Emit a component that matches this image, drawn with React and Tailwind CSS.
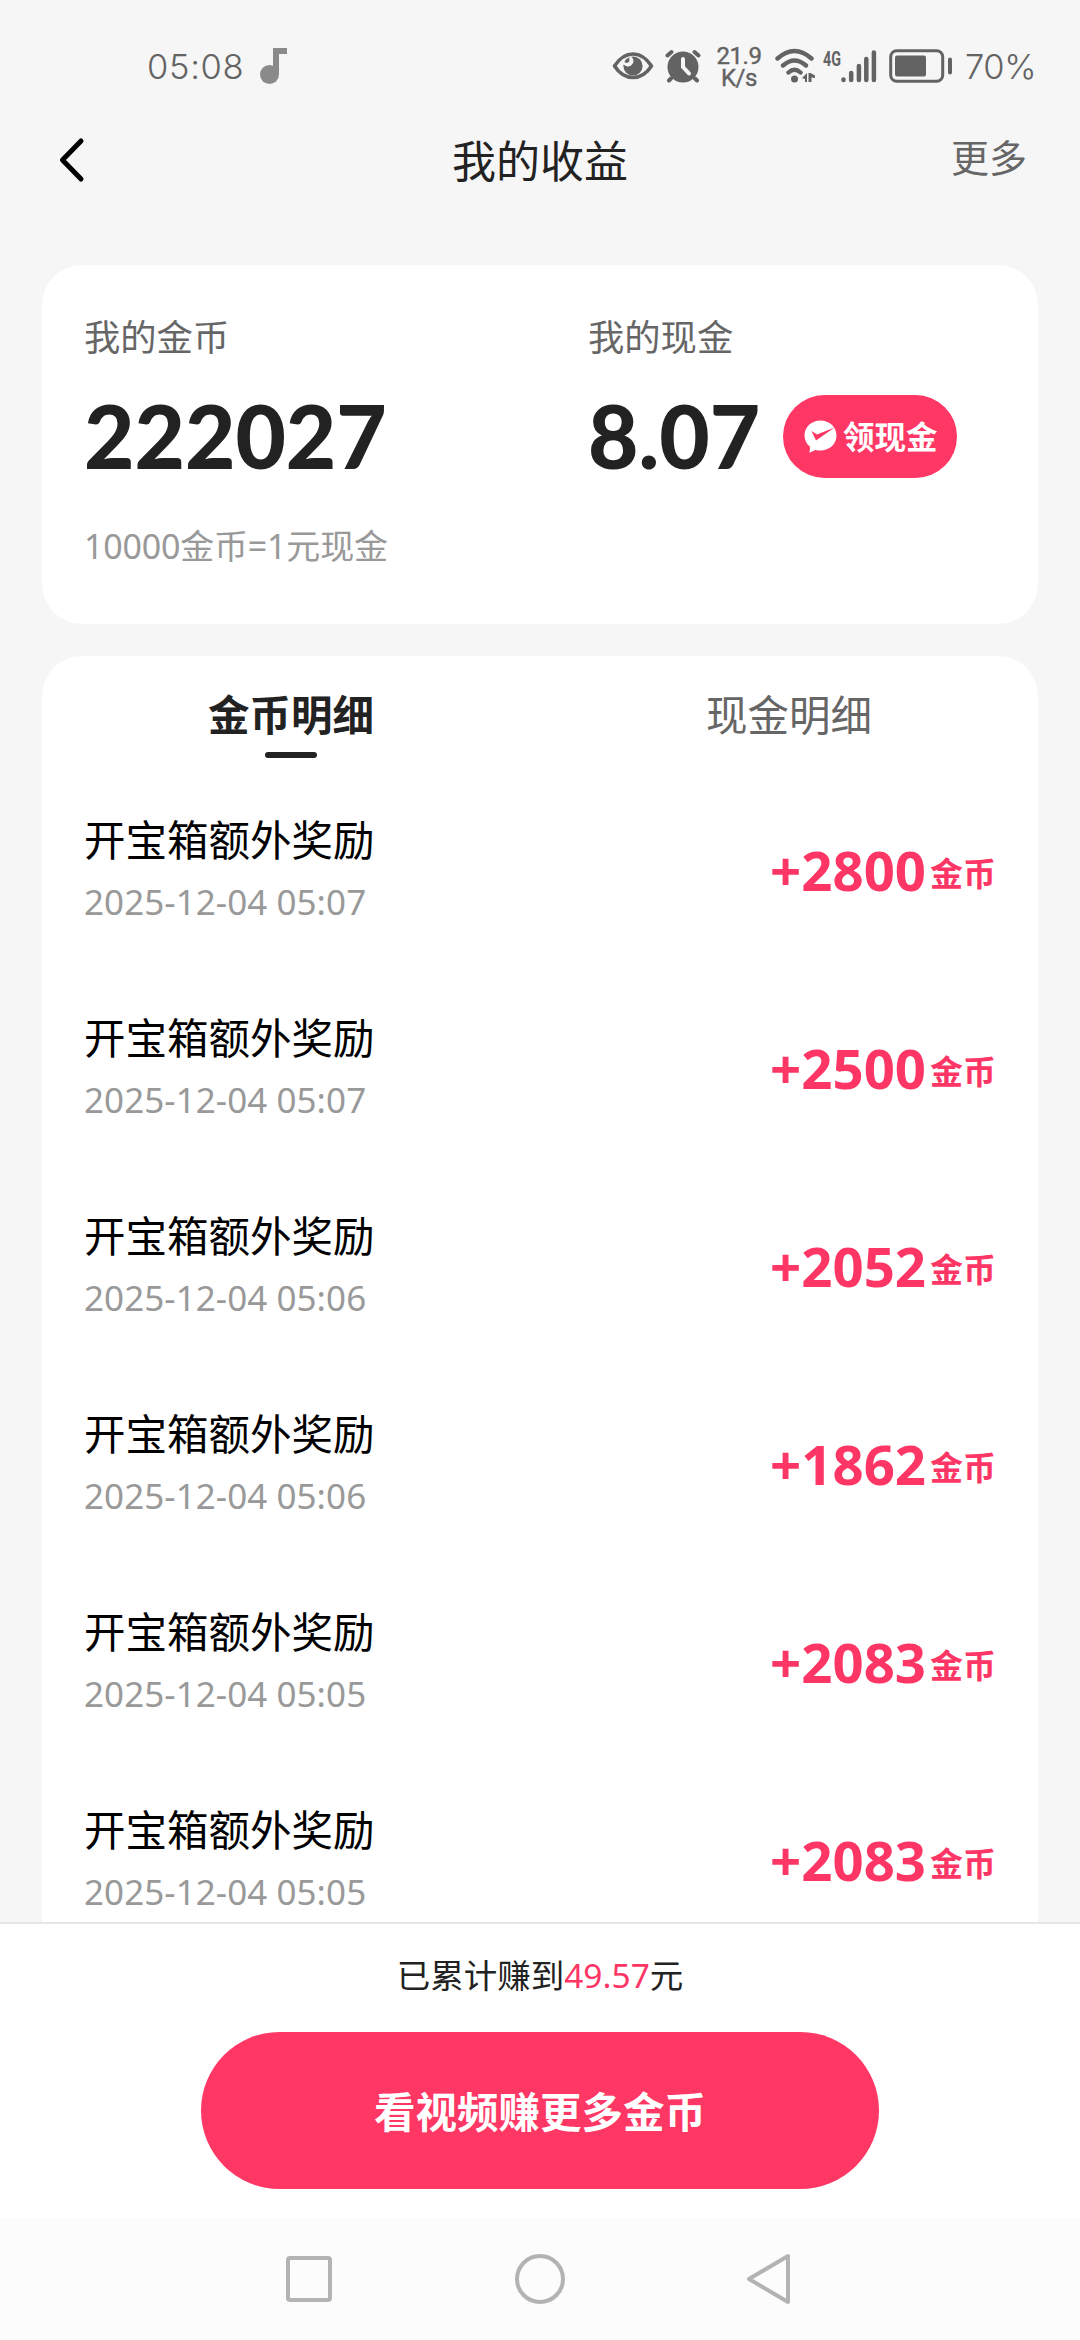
const records = [
  { title: '开宝箱额外奖励', time: '2025-12-04 05:07', amount: 2800 },
  { title: '开宝箱额外奖励', time: '2025-12-04 05:07', amount: 2500 },
  { title: '开宝箱额外奖励', time: '2025-12-04 05:06', amount: 2052 },
  { title: '开宝箱额外奖励', time: '2025-12-04 05:06', amount: 1862 },
  { title: '开宝箱额外奖励', time: '2025-12-04 05:05', amount: 2083 },
  { title: '开宝箱额外奖励', time: '2025-12-04 05:05', amount: 2083 },
]

function StatusBar() {
  return (
    <div className="flex-none h-[110px] pl-[147px] pr-[45px] pt-[22px] flex flex-row items-center text-[#636363]">
      <span className="w-[98px] mt-[2px] font-['Inter'] font-light text-[34.5px] leading-[44px] tracking-[0.7px] whitespace-nowrap">05:08</span>
      <svg className="ml-[15px] w-[28px] h-[38px]" viewBox="0 0 28 38" fill="#8a8a8a">
        <circle cx="9.5" cy="27.5" r="9.5" />
        <path d="M13 1H27V7H19V28H13Z" />
      </svg>
      <div className="flex-auto"></div>
      <svg className="w-[42px] h-[30px]" viewBox="0 0 42 30">
        <path d="M2.5 15C8 6.5 14 3 21 3S34 6.5 39.5 15C34 23.5 28 26.5 21 26.5S8 23.5 2.5 15Z" fill="none" stroke="currentColor" strokeWidth="3.6" strokeLinejoin="round" />
        <circle cx="21" cy="15" r="9.6" fill="currentColor" />
        <path d="M10.5 10.5A5.5 5.5 0 0 0 20.5 13A5 5 0 0 0 18.5 5.5L17 7Q18.5 11 15 12Z" fill="#f6f6f6" />
      </svg>
      <svg className="ml-[10px] w-[38px] h-[34px]" viewBox="0 0 38 34" fill="none" stroke="currentColor" strokeLinecap="round">
        <circle cx="19" cy="18" r="15.5" fill="currentColor" stroke="none" />
        <path d="M3.5 6.5L7.5 3M34.5 6.5L30.5 3M7 29.5L5 31.5M31 29.5L33 31.5" strokeWidth="4" />
        <path d="M19 10V18L25 24.5" stroke="#f6f6f6" strokeWidth="4" />
      </svg>
      <div className="ml-[13px] w-[48px] mt-px flex flex-col items-center font-['Roboto'] text-[24px] leading-[22px] tracking-[-0.4px] [-webkit-text-stroke:0.4px_#636363]">
        <span>21.9</span>
        <span>K/s</span>
      </div>
      <svg className="ml-[12px] w-[42px] h-[36px]" viewBox="0 0 42 36" fill="none" stroke="currentColor" strokeLinecap="round">
        <path d="M2.5 10.5Q19.5 -4.5 36.5 10.5M8 17.5Q19.5 7.5 31 17.5M13.5 24.5Q19.5 19 25.5 24.5" strokeWidth="4.4" />
        <circle cx="19.5" cy="31" r="3.5" fill="currentColor" stroke="none" />
        <path d="M27 30L32 25V34H30V31ZM33.5 25H35.5L40 27.5V30L36.5 29.5V34H33.5Z" fill="currentColor" stroke="none" />
      </svg>
      <svg className="ml-[6px] w-[54px] h-[36px] overflow-visible" viewBox="0 0 54 36" fill="none" stroke="currentColor" strokeLinecap="round">
        <text x="0" y="17.5" textLength="18" lengthAdjust="spacingAndGlyphs" fill="currentColor" stroke="none" className="font-['Roboto'] font-bold text-[21px]">4G</text>
        <path d="M20.5 31.5V32M28.2 25V32M35.9 18V32M43.3 11V32M50.9 4.5V32" strokeWidth="4.5" />
      </svg>
      <svg className="ml-[12px] w-[64px] h-[34px]" viewBox="0 0 64 34">
        <rect x="1.7" y="1.7" width="52" height="30.5" rx="6" fill="none" stroke="currentColor" strokeWidth="3" />
        <rect x="6" y="6.5" width="31" height="21" rx="2" fill="currentColor" />
        <rect x="59" y="8.5" width="4" height="17" rx="2" fill="currentColor" />
      </svg>
      <span className="ml-[12px] mt-[2px] w-[70px] font-['Inter'] font-light text-[34.5px] leading-[44px] tracking-[-0.4px] whitespace-nowrap">70%</span>
    </div>
  )
}

function Header() {
  return (
    <div className="flex-none h-[155px] px-[54px] grid grid-cols-3 items-start">
      <svg className="mt-[27px] w-[36px] h-[46px]" viewBox="0 0 36 46" fill="none" stroke="#000" strokeWidth="5" strokeLinecap="round" strokeLinejoin="round">
        <path d="M27 4L8.5 23L27 42" />
      </svg>
      <h1 className="mt-[21px] text-center text-[44px] leading-[60px] text-[#222]">我的收益</h1>
      <span className="mt-[17px] -mr-px text-right text-[38px] leading-[60px] text-[#666]">更多</span>
    </div>
  )
}

function CashButton() {
  return (
    <button className="w-[174px] h-[83px] rounded-full bg-[#ff3765] flex flex-row items-center pl-[21px]">
      <svg className="w-[33px] h-[33px]" viewBox="0 0 33 33">
        <path d="M16.5 0.5C25.5 0.5 32.5 7 32.5 15.5S25.5 30.5 16.5 30.5Q14 30.5 11.5 30L5.5 32.8L6 26.8C2.5 24 0.5 20 0.5 15.5C0.5 7 7.5 0.5 16.5 0.5Z" fill="#fff" />
        <path d="M7.5 11L13 14.5L30.5 7.5L12 20.5Z" fill="#ff3765" />
      </svg>
      <span className="ml-[6px] mt-px text-white font-bold text-[31.5px] leading-[44px] whitespace-nowrap">领现金</span>
    </button>
  )
}

function Summary() {
  return (
    <div className="flex-none mx-[42px] h-[359px] rounded-[40px] bg-white pl-[42px] flex flex-row">
      <div className="w-[504px] flex flex-col">
        <span className="mt-[46px] text-[36.3px] leading-[52px] text-[#666]">我的金币</span>
        <span className="mt-[23px] h-[100px] font-['Lato'] text-[87px] leading-[100px] font-black text-[#222]">222027</span>
        <span className="mt-[34px] text-[34px] leading-[52px] tracking-[-0.2px] text-[#999]">10000金币=1元现金</span>
      </div>
      <div className="flex flex-col">
        <span className="mt-[46px] text-[36.3px] leading-[52px] text-[#666]">我的现金</span>
        <div className="mt-[23px] h-[100px] flex flex-row items-center">
          <span className="w-[195px] font-['Lato'] text-[87px] leading-[100px] font-black text-[#222]">8.07</span>
          <CashButton />
        </div>
      </div>
    </div>
  )
}

function Record({ title, time, amount }) {
  return (
    <li className="h-[198px] flex flex-row justify-between">
      <div className="flex flex-col">
        <span className="text-[41.5px] leading-[60px] text-black">{title}</span>
        <span className="mt-[5px] text-[35px] leading-[54px] tracking-[0.06px] text-[#999]">{time}</span>
      </div>
      <div className="mt-[30px] h-[60px] flex flex-row items-center text-[#fe3666] font-bold">
        <span className="text-[54.5px] leading-[60px]">+{amount}</span>
        <span className="ml-[4px] mt-[7px] text-[33px] leading-[60px]">金币</span>
      </div>
    </li>
  )
}

function Details() {
  return (
    <div className="flex-auto min-h-0 overflow-hidden mt-[32px] mx-[42px] rounded-t-[40px] bg-white">
      <div className="h-[154px] grid grid-cols-2 text-[41.5px] leading-[60px] text-center">
        <div className="pt-[29px] flex flex-col items-center">
          <span className="font-bold text-[#222]">金币明细</span>
          <div className="mt-[7px] w-[52px] h-[6px] rounded-full bg-[#222]"></div>
        </div>
        <span className="pt-[29px] text-[#666]">现金明细</span>
      </div>
      <ul className="pl-[42px] pr-[42px]">
        {records.map((item, i) => <Record key={i} {...item} />)}
      </ul>
    </div>
  )
}

function BottomBar() {
  return (
    <div className="flex-none h-[296px] border-t-2 border-[#e5e5e5] bg-white flex flex-col items-center">
      <p className="mt-[25px] text-[33.5px] leading-[52px] text-[#222]">
        已累计赚到<span className="text-[#fe3666]">49.57</span>元
      </p>
      <button className="mt-[31px] w-[678px] h-[157px] pt-[3px] rounded-full bg-[#ff3765] text-white font-bold text-[41.5px]">看视频赚更多金币</button>
    </div>
  )
}

function NavBar() {
  return (
    <div className="flex-none h-[122px] bg-[#fcfcfc] pt-[34px] px-[283px] flex flex-row items-start justify-between">
      <svg className="w-[52px] h-[54px]" viewBox="0 0 52 54" fill="none" stroke="#b3b3b3" strokeWidth="4">
        <rect x="5" y="6" width="42" height="42" rx="2" />
      </svg>
      <svg className="w-[52px] h-[54px]" viewBox="0 0 52 54" fill="none" stroke="#b3b3b3" strokeWidth="4">
        <circle cx="26" cy="27" r="23" />
      </svg>
      <svg className="w-[52px] h-[54px]" viewBox="0 0 52 54" fill="none" stroke="#b3b3b3" strokeWidth="4" strokeLinejoin="round">
        <path d="M43 4V50L4 27Z" />
      </svg>
    </div>
  )
}

export default function App() {
  return (
    <div className="w-[1080px] h-[2340px] overflow-hidden bg-[#f6f6f6] flex flex-col font-['Noto_Sans','Noto_Sans_CJK_SC',sans-serif]">
      <StatusBar />
      <Header />
      <Summary />
      <Details />
      <BottomBar />
      <NavBar />
    </div>
  )
}
